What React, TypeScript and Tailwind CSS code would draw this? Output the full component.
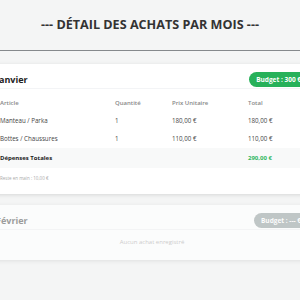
import React from 'react';

type Item = { name: string; qty: number; unit: string; total: string };

const janvier: Item[] = [
  { name: 'Manteau / Parka', qty: 1, unit: '180,00 €', total: '180,00 €' },
  { name: 'Bottes / Chaussures', qty: 1, unit: '110,00 €', total: '110,00 €' },
];

const cols = 'grid grid-cols-[115px_57px_76px_60px] pl-[4px]';

function MonthCard({
  title, budget, items, total, reste, empty = false,
}: { title: string; budget: string; items: Item[]; total?: string; reste?: string; empty?: boolean }) {
  return (
    <div className={`bg-white rounded-md shadow-[0_1px_4px_rgba(0,0,0,0.12)] pl-[16px] pr-[12px] ${empty ? 'opacity-70' : ''}`}>
      <div className="flex items-center justify-between h-[25px] pt-[7px] border-b border-gray-100">
        <h2 className={`text-[9px] leading-none font-bold ${empty ? 'text-[#777]' : 'text-[#222]'}`}>{title}</h2>
        <span className={`text-[6.5px] leading-[15px] h-[15px] font-bold text-white rounded-full px-[7px] ${empty ? 'bg-[#aab3b3]' : 'bg-[#27b15a]'}`}>
          {budget}
        </span>
      </div>

      {empty ? (
        <p className="text-center text-[6px] leading-[10px] text-[#bbb] pt-[7px] pb-[13px]">Aucun achat enregistré</p>
      ) : (
        <>
          <div className={`${cols} text-[6px] leading-[10px] font-semibold text-[#888] pt-[9px] pb-[4px]`}>
            <span>Article</span>
            <span>Quantité</span>
            <span>Prix Unitaire</span>
            <span>Total</span>
          </div>
          {items.map(it => (
            <div key={it.name} className={`${cols} text-[6.2px] text-[#444] h-[18px] items-center`}>
              <span>{it.name}</span>
              <span>{it.qty}</span>
              <span>{it.unit}</span>
              <span>{it.total}</span>
            </div>
          ))}
          <div className="bg-[#f8f9f9] -ml-[16px] -mr-[12px] pl-[16px] pr-[12px]">
            <div className={`${cols} text-[6px] font-bold h-[20px] items-center`}>
              <span className="text-[#222]">Dépenses Totales</span>
              <span />
              <span />
              <span className="text-[#2fb75e]">{total}</span>
            </div>
          </div>
          <p className="text-[4.5px] leading-[8px] text-[#aaa] pl-[4px] pt-[6px] pb-[12px]">Reste en main : {reste}</p>
        </>
      )}
    </div>
  );
}

export default function App() {
  return (
    <div className="min-h-[300px] w-[300px] overflow-hidden bg-[#f4f5f5]" style={{ fontFamily: '"Open Sans", sans-serif' }}>
      <header className="h-[51px] flex items-center justify-center border-b border-[#85898c]">
        <h1 className="text-[12.6px] font-bold text-[#333]">--- DÉTAIL DES ACHATS PAR MOIS ---</h1>
      </header>

      <div className="flex justify-center pt-[13px]">
        <div className="w-[340px] shrink-0 flex flex-col gap-[11px]">
          <MonthCard title="Janvier" budget="Budget : 300 €" items={janvier} total="290,00 €" reste="10,00 €" />
          <MonthCard title="Février" budget="Budget : --- €" items={[]} empty />
        </div>
      </div>
    </div>
  );
}
